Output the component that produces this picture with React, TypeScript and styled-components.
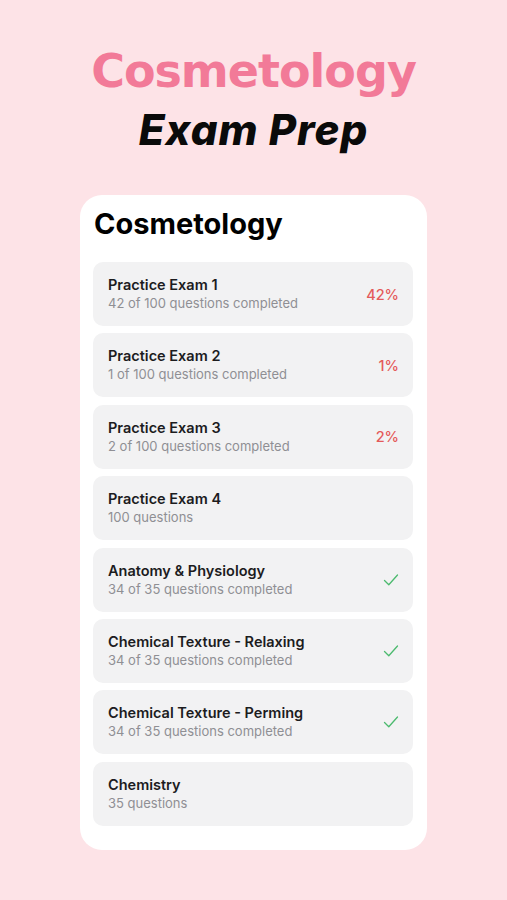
import React from 'react';
import styled, { createGlobalStyle } from 'styled-components';

const GlobalStyle = createGlobalStyle`
  html, body {
    margin: 0;
    padding: 0;
    background: #fde3e7;
  }
  * { box-sizing: border-box; }
`;

const Page = styled.div`
  width: 507px;
  height: 900px;
  background: #fde3e7;
  display: flex;
  flex-direction: column;
  align-items: center;
  padding-top: 43px;
  font-family: Inter, "Noto Sans", sans-serif;
`;

const Brand = styled.h1`
  margin: 0;
  font-family: "DejaVu Sans", Lato, sans-serif;
  font-weight: 700;
  font-size: 46px;
  line-height: 56px;
  letter-spacing: -1px;
  color: #f27a98;
`;

const Subtitle = styled.h2`
  margin: 6px 0 0;
  font-family: Inter, sans-serif;
  font-style: italic;
  font-weight: 800;
  font-size: 42px;
  line-height: 50px;
  letter-spacing: 1px;
  color: #0a0a0a;
`;

const Card = styled.div`
  margin-top: 40px;
  width: 347px;
  background: #fff;
  border-radius: 22px;
  padding: 12px 14px 24px 13px;
  display: flex;
  flex-direction: column;
`;

const CardTitle = styled.div`
  font-weight: 700;
  font-size: 29px;
  line-height: 34px;
  color: #000;
  padding-left: 1px;
  margin-bottom: 21px;
`;

const List = styled.div`
  display: flex;
  flex-direction: column;
  gap: 7.4px;
`;

const Row = styled.div`
  height: 64px;
  border-radius: 10px;
  background: #f2f2f3;
  display: flex;
  align-items: center;
  padding: 0 14px 0 15px;
`;

const Texts = styled.div`
  flex: 1;
  display: flex;
  flex-direction: column;
  gap: 1px;
`;

const RowTitle = styled.div`
  font-weight: 600;
  font-size: 14.5px;
  line-height: 18px;
  color: #1c1c1e;
`;

const RowSub = styled.div`
  font-size: 13px;
  line-height: 17px;
  color: #8f8f94;
`;

const Percent = styled.div`
  font-size: 14.5px;
  font-weight: 500;
  color: #e45a5a;
`;

const Check = styled.svg`
  width: 16px;
  height: 16px;
`;

type Item = { title: string; sub: string; status?: string };

const items: Item[] = [
  { title: 'Practice Exam 1', sub: '42 of 100 questions completed', status: '42%' },
  { title: 'Practice Exam 2', sub: '1 of 100 questions completed', status: '1%' },
  { title: 'Practice Exam 3', sub: '2 of 100 questions completed', status: '2%' },
  { title: 'Practice Exam 4', sub: '100 questions' },
  { title: 'Anatomy & Physiology', sub: '34 of 35 questions completed', status: 'check' },
  { title: 'Chemical Texture - Relaxing', sub: '34 of 35 questions completed', status: 'check' },
  { title: 'Chemical Texture - Perming', sub: '34 of 35 questions completed', status: 'check' },
  { title: 'Chemistry', sub: '35 questions' },
];

export default function App() {
  return (
    <Page>
      <GlobalStyle />
      <Brand>Cosmetology</Brand>
      <Subtitle>Exam Prep</Subtitle>
      <Card>
        <CardTitle>Cosmetology</CardTitle>
        <List>
          {items.map((it) => (
            <Row key={it.title}>
              <Texts>
                <RowTitle>{it.title}</RowTitle>
                <RowSub>{it.sub}</RowSub>
              </Texts>
              {it.status === 'check' ? (
                <Check viewBox="0 0 16 16" fill="none">
                  <path d="M1.5 8.5 L5.8 12.8 L14.5 3" stroke="#4cba6e" strokeWidth="1.3" strokeLinecap="round" strokeLinejoin="round" />
                </Check>
              ) : it.status ? (
                <Percent>{it.status}</Percent>
              ) : null}
            </Row>
          ))}
        </List>
      </Card>
    </Page>
  );
}
